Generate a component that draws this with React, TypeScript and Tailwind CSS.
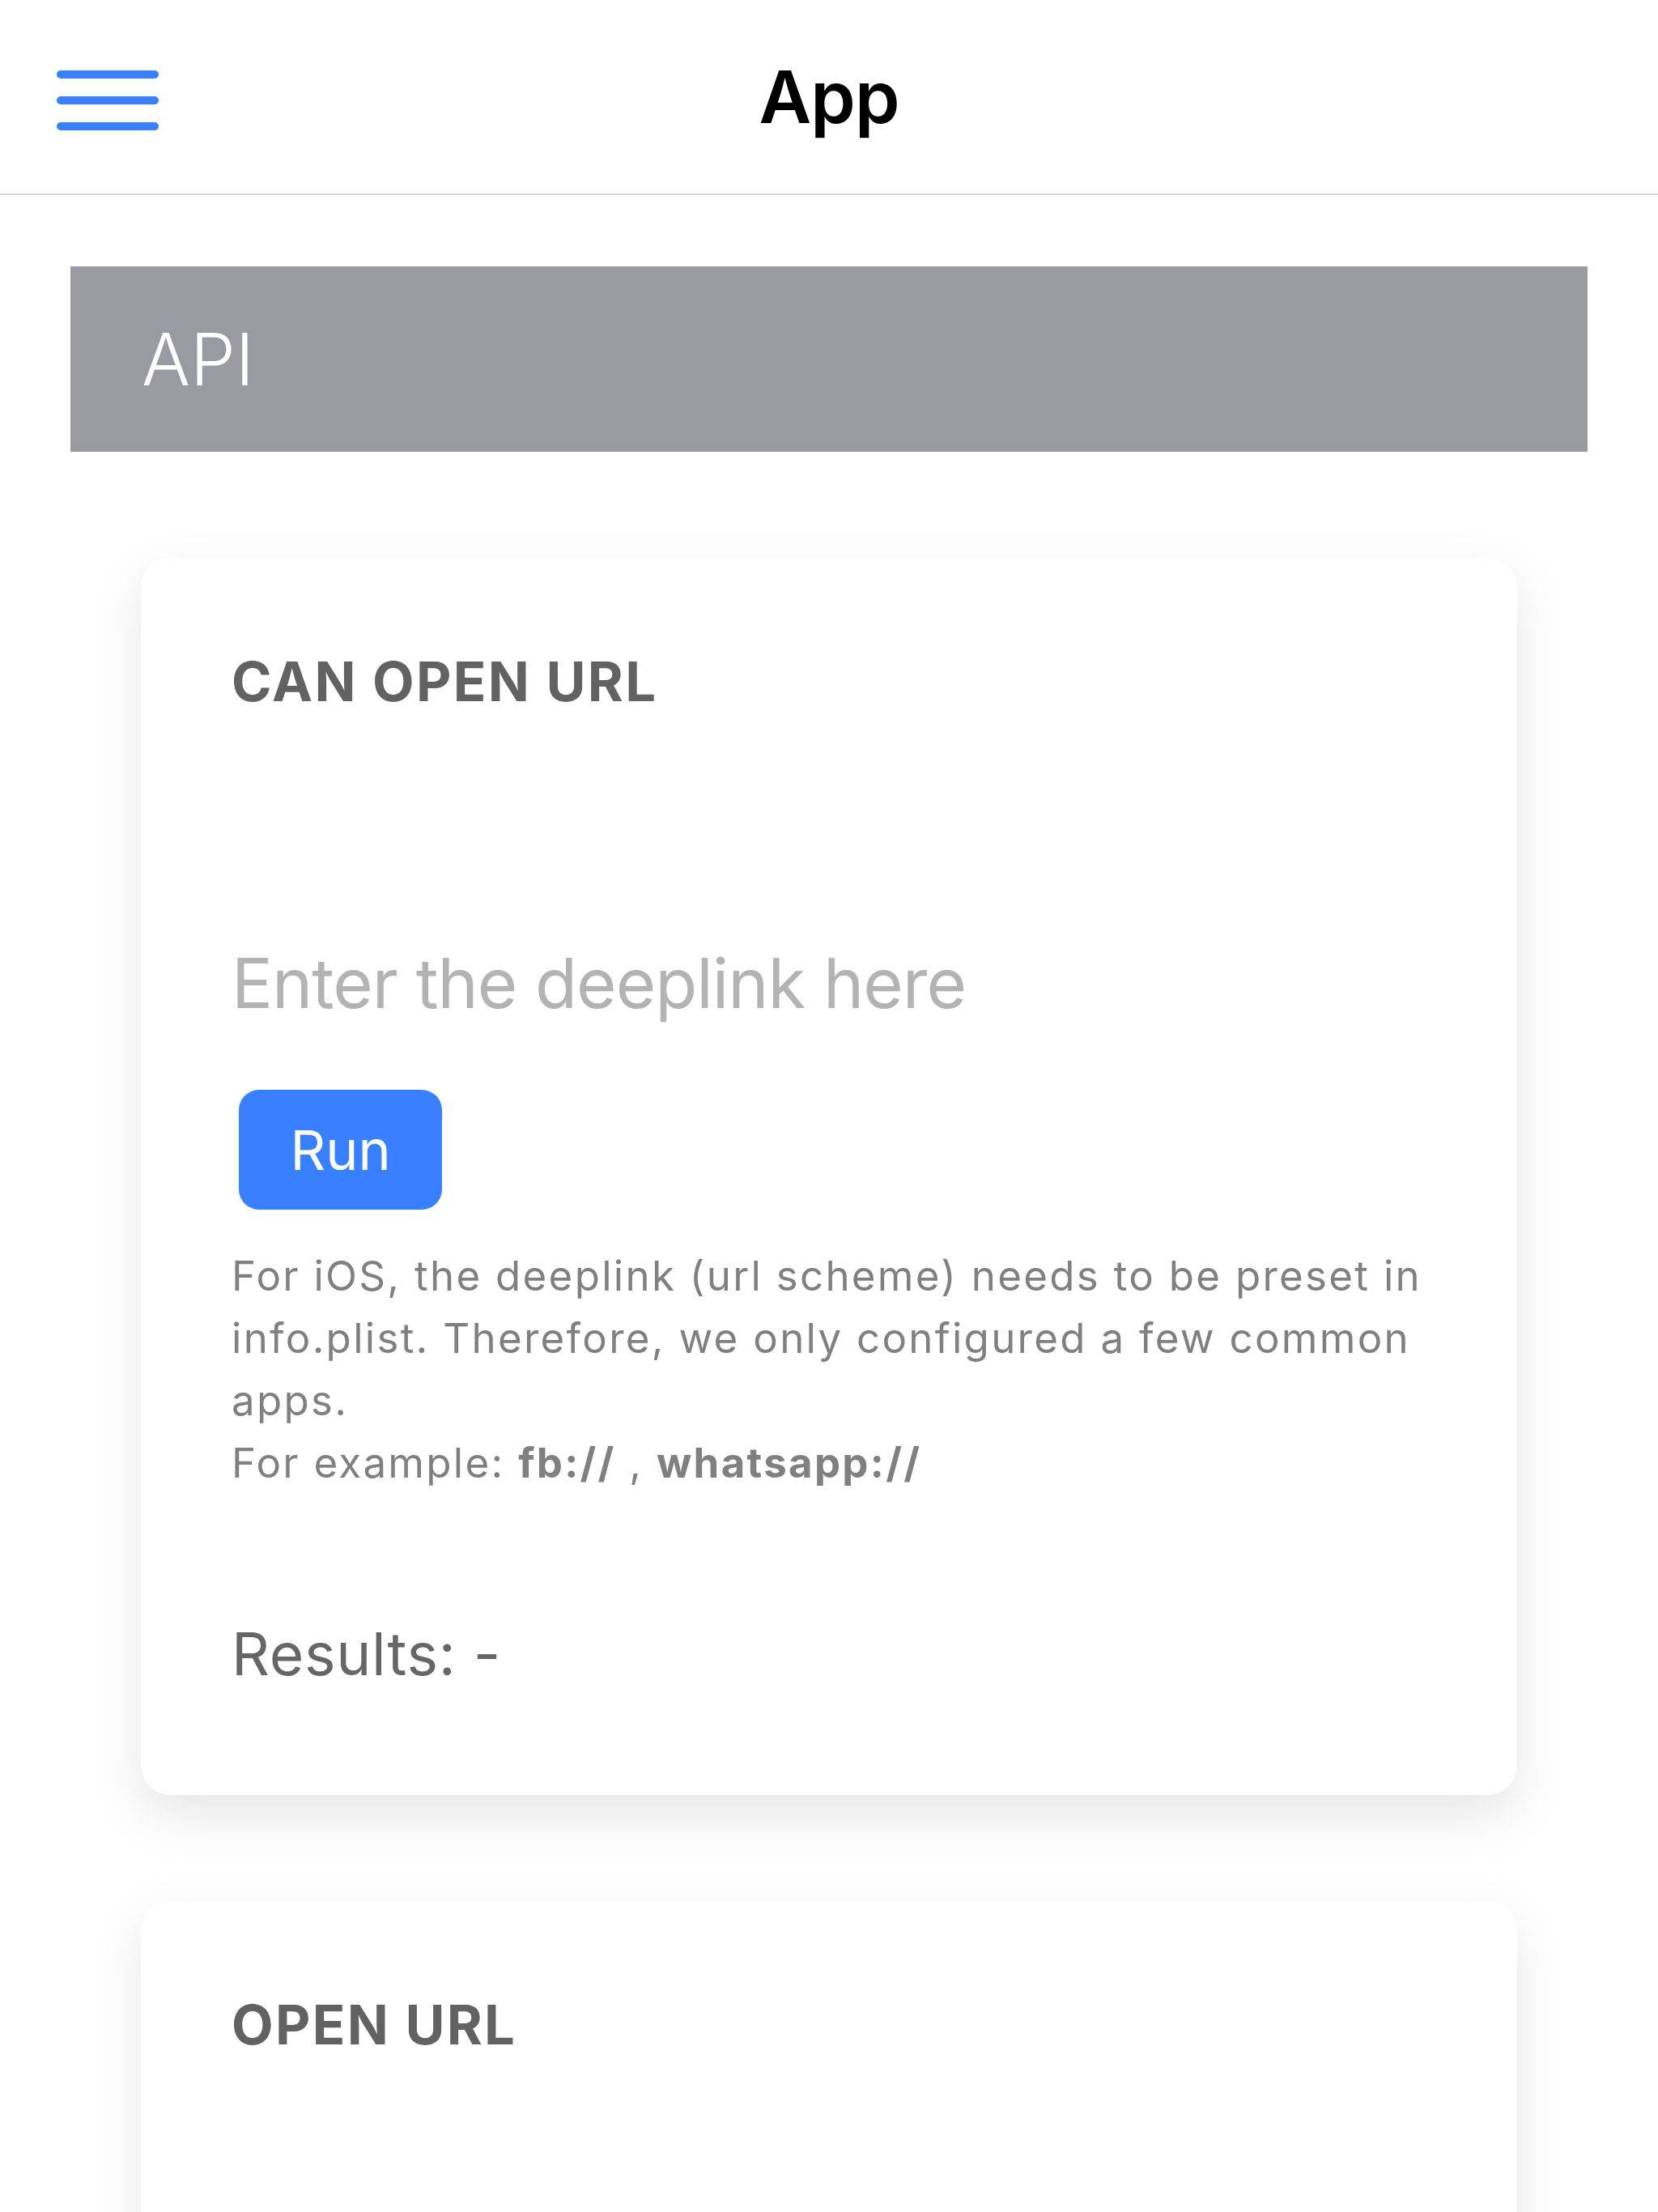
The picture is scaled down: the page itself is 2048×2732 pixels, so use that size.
import React from "react";

function Card({ title, children }: { title: string; children?: React.ReactNode }) {
  return (
    <div className="mx-[174px] rounded-[37px] bg-white shadow-[0_24px_64px_rgba(0,0,0,0.1)] pl-[112px] pr-[100px] pt-[119px] pb-[138px]">
      <div className="text-[67px] leading-none font-bold tracking-[0.035em] text-[#626262]">{title}</div>
      {children}
    </div>
  );
}

export default function App() {
  return (
    <div className="h-[2732px] overflow-hidden bg-white" style={{ fontFamily: "Inter, 'Noto Sans', sans-serif" }}>
      <header className="relative h-[241px] border-b-2 border-[#d4d4d6] flex items-center justify-center">
        <div className="absolute left-[70px] top-[87px] flex flex-col gap-[22px]">
          <div className="h-[10px] w-[126px] rounded-full bg-[#3880ff]" />
          <div className="h-[10px] w-[126px] rounded-full bg-[#3880ff]" />
          <div className="h-[10px] w-[126px] rounded-full bg-[#3880ff]" />
        </div>
        <div className="text-[89px] leading-none font-semibold text-black tracking-[-0.01em]">App</div>
      </header>
      <main className="pt-[88px]">
        <div className="mx-[87px] h-[229px] bg-[#9a9aa3] flex items-center pl-[88px]">
          <span className="text-[89px] leading-none font-light text-white">API</span>
        </div>
        <div className="h-[131px]" />
        <Card title="CAN OPEN URL">
          <input
            readOnly
            placeholder="Enter the deeplink here"
            className="mt-[280px] block w-full h-[120px] bg-transparent outline-none text-[85px] tracking-[-0.012em] text-[#333] placeholder:text-[#b3b3b3]"
          />
          <button className="mt-[71px] ml-[9px] h-[148px] w-[251px] rounded-[25px] bg-[#3880ff] text-white text-[68px] leading-none font-normal">
            Run
          </button>
          <div className="mt-[43px] text-[51px] leading-[77px] text-[#808080] tracking-[0.045em]">
            <div>For iOS, the deeplink (url scheme) needs to be preset in info.plist. Therefore, we only configured a few common apps.</div>
            <div>
              For example: <b className="font-bold">fb://</b> , <b className="font-bold">whatsapp://</b>
            </div>
          </div>
          <div className="mt-[161px] text-[73px] leading-none text-[#666] tracking-[0.01em]">Results: -</div>
        </Card>
        <div className="h-[131px]" />
        <Card title="OPEN URL">
          <div className="h-[1300px]" />
        </Card>
      </main>
    </div>
  );
}
